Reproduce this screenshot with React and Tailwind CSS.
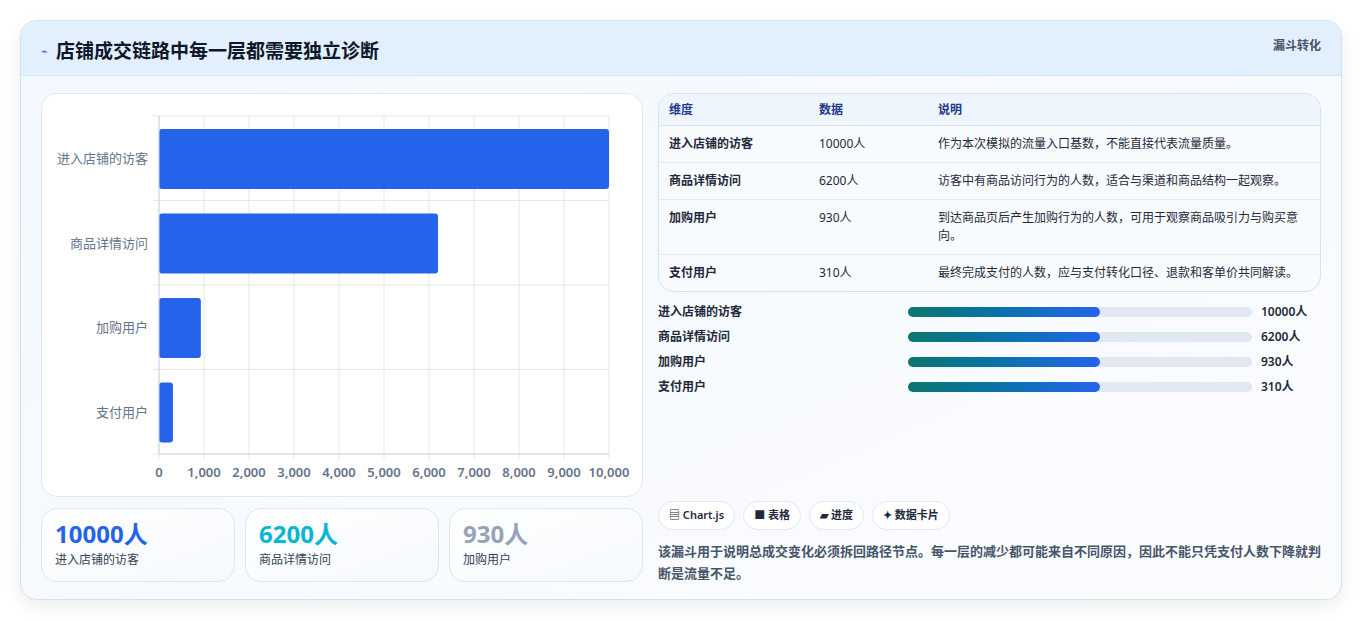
import React from "react";

const rows = [
  ["进入店铺的访客", "10000人", "作为本次模拟的流量入口基数，不能直接代表流量质量。", 10000],
  ["商品详情访问", "6200人", "访客中有商品访问行为的人数，适合与渠道和商品结构一起观察。", 6200],
  ["加购用户", "930人", "到达商品页后产生加购行为的人数，可用于观察商品吸引力与购买意向。", 930],
  ["支付用户", "310人", "最终完成支付的人数，应与支付转化口径、退款和客单价共同解读。", 310],
];

function Chart() {
  const x0 = 117, w = 450, y0 = 22, h = 338, rh = h / 4;
  return (
    <svg width="602" height="403" className="block">
      {Array.from({ length: 11 }).map((_, i) => (
        <g key={i}>
          <line x1={x0 + i * 45} x2={x0 + i * 45} y1={y0} y2={y0 + h + 6} stroke="#e5e7eb" />
          <text x={x0 + i * 45} y={383} textAnchor="middle" fontSize="13" fill="#64748b" fontWeight="600">
            {(i * 1000).toLocaleString("en-US")}
          </text>
        </g>
      ))}
      {[0, 1, 2, 3, 4].map((i) => (
        <line key={i} x1={x0 - 6} x2={x0 + w} y1={y0 + i * rh} y2={y0 + i * rh} stroke="#e5e7eb" />
      ))}
      {rows.map((r, i) => (
        <g key={i}>
          <rect x={x0} y={y0 + i * rh + 13} width={(r[3] / 10000) * w} height={60} rx="3" fill="#2563eb" />
          <text x={106} y={y0 + i * rh + 47} textAnchor="end" fontSize="13" fill="#64748b">{r[0]}</text>
        </g>
      ))}
      <line x1={x0} x2={x0} y1={y0} y2={y0 + h} stroke="#cbd5e1" />
      <line x1={x0} x2={x0 + w} y1={y0 + h} y2={y0 + h} stroke="#cbd5e1" />
    </svg>
  );
}

export default function App() {
  return (
    <div className="min-h-[621px] bg-white p-5 pb-5" style={{ fontFamily: '"Noto Sans", "Noto Sans CJK SC", sans-serif' }}>
      <div className="w-[1322px] h-[580px] rounded-2xl border border-[#cfe3f3] overflow-hidden bg-gradient-to-br from-[#f2f8fe] to-[#fbfcfe] shadow-[0_6px_18px_rgba(15,23,42,0.08)]">
        <div className="h-[55px] bg-[#e2effc] border-b border-[#d4e6f7] flex items-start justify-between px-5">
          <div className="flex items-center gap-2 mt-[16px]">
            <span className="text-[11px] text-[#2563eb]">⌁</span>
            <span className="text-[19px] font-bold text-[#0f172a]">店铺成交链路中每一层都需要独立诊断</span>
          </div>
          <span className="text-[12px] font-semibold text-[#475569] mt-[16px]">漏斗转化</span>
        </div>
        <div className="flex gap-[15px] px-5 pt-[17px]">
          <div className="w-[602px] flex flex-col gap-[11px]">
            <div className="h-[404px] bg-white rounded-2xl border border-[#e2e8f0]"><Chart /></div>
            <div className="flex gap-[10px]">
              {[["10000人", "text-[#2563eb]", "进入店铺的访客"], ["6200人", "text-[#06b6d4]", "商品详情访问"], ["930人", "text-[#94a3b8]", "加购用户"]].map((c, i) => (
                <div key={i} className="w-[194px] h-[74px] rounded-2xl border border-[#dbe7f3] bg-gradient-to-br from-white to-[#f5f9fd] px-[13px] pt-[10px]">
                  <div className={"text-[24px] font-bold leading-[30px] " + c[1]}>{c[0]}</div>
                  <div className="text-[12px] text-[#334155] mt-[2px]">{c[2]}</div>
                </div>
              ))}
            </div>
          </div>
          <div className="w-[666px] flex flex-col">
            <div className="rounded-2xl border border-[#d6e2ee] overflow-hidden bg-[#f8fbfe] text-[12px]">
              <div className="flex h-[32px] items-center bg-[#eef5fd] border-b border-[#d6e2ee] font-semibold text-[#1e3a8a]">
                <div className="w-[160px] pl-[10px]">维度</div><div className="w-[119px]">数据</div><div className="flex-1">说明</div>
              </div>
              {rows.map((r, i) => (
                <div key={i} className={"flex py-[9px] text-[#1e293b] leading-[18px] " + (i < 3 ? "border-b border-[#e2e8f0]" : "")}>
                  <div className="w-[160px] pl-[10px] font-semibold">{r[0]}</div>
                  <div className="w-[119px]">{r[1]}</div>
                  <div className="flex-1 pr-[10px]">{r[2]}</div>
                </div>
              ))}
            </div>
            <div className="flex flex-col gap-[6px] mt-[10px]">
              {rows.map((r, i) => (
                <div key={i} className="flex items-center h-[19px] text-[12px] font-semibold text-[#1e293b]">
                  <div className="w-[250px]">{r[0]}</div>
                  <div className="w-[344px] h-[10px] rounded-full bg-[#e2e8f0]">
                    <div className="w-[192px] h-[10px] rounded-full bg-gradient-to-r from-[#0f766e] to-[#2563eb]" />
                  </div>
                  <div className="ml-[9px]">{r[1]}</div>
                </div>
              ))}
            </div>
            <div className="flex gap-[8px] mt-[105px]">
              {["▤ Chart.js", "■ 表格", "▰ 进度", "✦ 数据卡片"].map((t) => (
                <span key={t} className="h-[29px] px-[10px] flex items-center rounded-full border border-[#e2e8f0] bg-white text-[11px] font-semibold text-[#1e293b]">{t}</span>
              ))}
            </div>
            <p className="mt-[10px] text-[13px] leading-[22px] font-semibold text-[#475569]">该漏斗用于说明总成交变化必须拆回路径节点。每一层的减少都可能来自不同原因，因此不能只凭支付人数下降就判断是流量不足。</p>
          </div>
        </div>
      </div>
    </div>
  );
}
